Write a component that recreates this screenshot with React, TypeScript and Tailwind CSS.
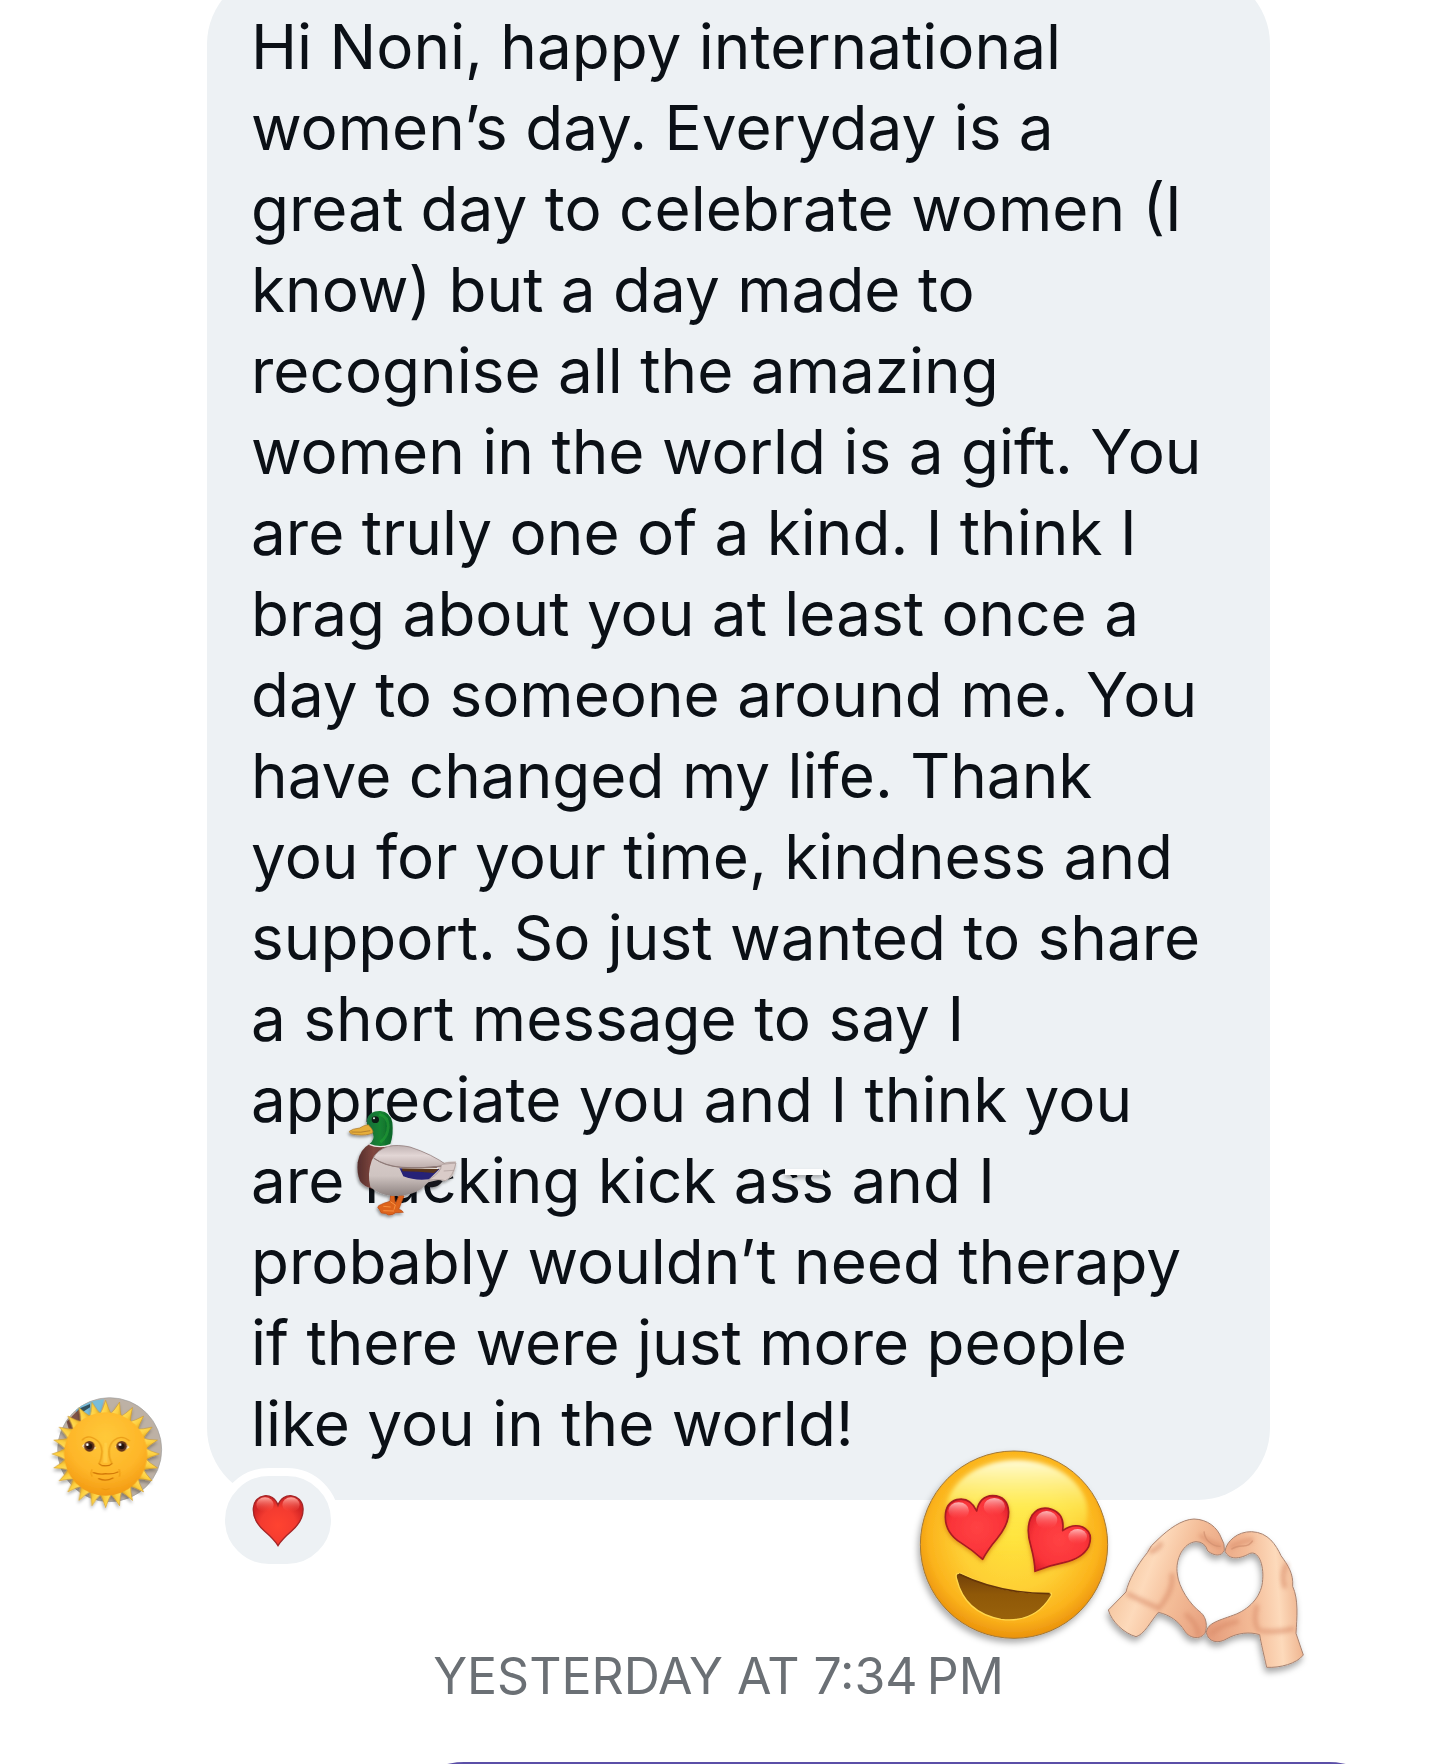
const messageLines = [
  "Hi Noni, happy international",
  "women’s day. Everyday is a",
  "great day to celebrate women (I",
  "know) but a day made to",
  "recognise all the amazing",
  "women in the world is a gift. You",
  "are truly one of a kind. I think I",
  "brag about you at least once a",
  "day to someone around me. You",
  "have changed my life. Thank",
  "you for your time, kindness and",
  "support. So just wanted to share",
  "a short message to say I",
  "appreciate you and I think you",
  "are fucking kick ass and I",
  "probably wouldn’t need therapy",
  "if there were just more people",
  "like you in the world!",
];

const rays = Array.from({ length: 24 }, (_, i) => i * 15);

function SunAvatar() {
  return (
    <svg viewBox="45 48 312 312" className="size-[104px] shrink-0 overflow-visible" role="img" aria-label="Sun with face">
      <defs>
        <radialGradient id="sunFace" cx="0.5" cy="0.3" r="0.7">
          <stop offset="0" stopColor="#ffc93a" />
          <stop offset="0.65" stopColor="#feb629" />
          <stop offset="1" stopColor="#f39a12" />
        </radialGradient>
        <linearGradient id="sunRay" x1="0" y1="0" x2="1" y2="0">
          <stop offset="0" stopColor="#ffe36a" />
          <stop offset="0.55" stopColor="#fdcf3e" />
          <stop offset="1" stopColor="#d79a1e" />
        </linearGradient>
        <filter id="sunShadow" x="-20%" y="-20%" width="140%" height="150%">
          <feDropShadow dx="-2" dy="8" stdDeviation="5" floodOpacity="0.3" />
        </filter>
      </defs>
      <circle cx="209" cy="209" r="156" fill="#bdb1a5" stroke="#9e9e9e" strokeWidth="2" />
      <path d="M108 90Q145 60 192 58L180 105L110 130Z" fill="#79bddb" />
      <path d="M80 125L118 86L135 125L90 160Z" fill="#805448" />
      <path d="M120 85L150 72L150 82L125 98Z" fill="#31515f" />
      <g filter="url(#sunShadow)">
        {rays.map((a) => (
          <path
            key={a}
            d="M177 108Q189 88 197 61Q205 88 217 108Z"
            fill="url(#sunRay)"
            stroke="#c8952a"
            strokeWidth="1.5"
            transform={`rotate(${a} 197 222)`}
          />
        ))}
        <circle cx="197" cy="222" r="125" fill="url(#sunFace)" />
      </g>
      <path d="M126 181Q144 160 172 182Q185 192 186 215Q184 240 177 251Q197 266 216 250Q207 237 207 213Q210 190 222 181Q244 162 269 183" fill="none" stroke="#e18c0b" strokeWidth="4" opacity="0.65" />
      <path d="M193 188Q189 222 190 248L203 248Q203 214 201 188Z" fill="#ffd14c" opacity="0.7" />
      <path d="M126 198Q146 175 168 204Q146 222 126 198Z" fill="#fff1d4" />
      <path d="M226 200Q248 175 268 202Q247 221 226 200Z" fill="#fff1d4" />
      <circle cx="148" cy="199" r="16" fill="#65351b" />
      <circle cx="245" cy="199" r="16" fill="#65351b" />
      <circle cx="148" cy="199" r="9" fill="#24120d" />
      <circle cx="245" cy="199" r="9" fill="#24120d" />
      <circle cx="142" cy="194" r="4" fill="#fff" />
      <circle cx="240" cy="194" r="4" fill="#fff" />
      <path d="M177 251Q184 260 197 257Q210 260 217 250" fill="none" stroke="#cb7205" strokeWidth="3" />
      <path d="M160 278Q180 285 197 281Q216 284 234 276M176 296Q198 306 219 294" fill="none" stroke="#d27706" strokeWidth="4" strokeLinecap="round" />
      <path d="M156 268Q150 280 156 290M237 267Q243 278 238 290M185 326Q197 332 209 326" fill="none" stroke="#ec980f" strokeWidth="3" />
    </svg>
  );
}

function Duck() {
  return (
    <svg viewBox="0 0 480 420" className="absolute left-[113px] top-[1117px] h-[140px] w-[160px]" role="img" aria-label="Duck">
      <defs>
        <linearGradient id="duckHead" x1="0" y1="0" x2="1" y2="0">
          <stop offset="0" stopColor="#176b3b" />
          <stop offset="0.5" stopColor="#168432" />
          <stop offset="1" stopColor="#0b6429" />
        </linearGradient>
        <linearGradient id="duckBody" x1="0" y1="0" x2="0" y2="1">
          <stop offset="0" stopColor="#d9cdcc" />
          <stop offset="0.6" stopColor="#cfc4c1" />
          <stop offset="1" stopColor="#8d8280" />
        </linearGradient>
        <linearGradient id="duckWing" x1="0" y1="0" x2="0" y2="1">
          <stop offset="0" stopColor="#c0b2b2" />
          <stop offset="0.45" stopColor="#e2d6d5" />
          <stop offset="1" stopColor="#bdadab" />
        </linearGradient>
        <linearGradient id="duckBreast" x1="0" y1="0" x2="1" y2="0">
          <stop offset="0" stopColor="#552e2c" />
          <stop offset="0.5" stopColor="#80463f" />
          <stop offset="1" stopColor="#6d3f3b" />
        </linearGradient>
        <filter id="duckShadow" x="-20%" y="-20%" width="140%" height="150%">
          <feDropShadow dx="-3" dy="6" stdDeviation="5" floodOpacity="0.4" />
        </filter>
      </defs>
      <g filter="url(#duckShadow)">
        <path d="M213 312L210 337Q190 342 176 350Q170 356 178 361L184 372Q199 372 206 378Q220 378 226 371L250 370Q246 362 236 361L252 321L238 318L226 344L222 312Z" fill="#dd641d" stroke="#b54510" strokeWidth="2" />
        <path d="M211 338L226 348L222 362M190 352L212 354M190 365L222 366" fill="none" stroke="#f89142" strokeWidth="3" />
        <path d="M312 278Q350 262 368 277Q350 300 325 293Z" fill="#17171a" />
        <path d="M150 164Q119 181 113 220Q110 254 120 276Q130 292 157 299L190 230L208 169Z" fill="url(#duckBreast)" />
        <path d="M205 171Q165 186 155 215Q141 254 151 294Q174 315 215 321Q266 324 303 301L325 280L370 269Q390 274 400 258Q409 235 408 217Q390 216 364 222Q330 192 270 174Q238 167 205 171Z" fill="url(#duckBody)" />
        <path d="M238 236L250 262Q285 276 327 271L358 241L340 228Z" fill="#252077" />
        <path d="M246 237L345 233L357 239L342 252Q295 247 247 247Z" fill="#58351d" />
        <path d="M240 236L356 238" stroke="#f3ece8" strokeWidth="4" />
        <path d="M205 172Q170 184 160 207Q196 230 243 235Q305 239 359 232L383 230Q337 196 270 174Q232 166 205 172Z" fill="url(#duckWing)" stroke="#85706e" strokeWidth="2" />
        <path d="M162 208Q193 231 243 235Q310 239 364 231" fill="none" stroke="#8e7976" strokeWidth="3" />
        <path d="M325 273Q358 270 376 275Q398 266 408 222Q377 218 364 228Q366 249 325 273Z" fill="#d9cbc8" stroke="#a29290" strokeWidth="2" />
        <path d="M370 226L405 222M371 246L402 244" stroke="#a99997" strokeWidth="2" />
        <path d="M147 168Q176 180 210 170L212 163L151 162Z" fill="#ebe7e4" />
        <path d="M149 164Q165 151 159 134Q137 121 141 91Q149 65 181 66Q211 69 217 100Q221 136 211 165Q180 177 149 164Z" fill="url(#duckHead)" />
        <path d="M178 76Q205 82 205 113Q203 144 181 160" fill="none" stroke="#31bc39" strokeWidth="8" opacity="0.35" />
        <path d="M145 107Q130 109 119 117Q98 119 88 127Q89 137 110 137Q138 141 158 132Q162 125 145 107Z" fill="#e6ae3a" stroke="#a9752b" strokeWidth="2" />
        <path d="M94 129Q122 132 151 125" fill="none" stroke="#9b692a" strokeWidth="2" />
        <ellipse cx="166" cy="92" rx="11" ry="10" fill="#111b18" />
        <circle cx="162" cy="88" r="3" fill="#dff3e8" />
      </g>
    </svg>
  );
}

function HeartEyes() {
  return (
    <svg viewBox="0 0 690 660" className="absolute -bottom-[150px] right-[140px] h-[220px] w-[230px] overflow-visible" role="img" aria-label="Smiling face with heart eyes">
      <defs>
        <radialGradient id="faceBase" cx="0.5" cy="0.45" r="0.57">
          <stop offset="0" stopColor="#ffe43d" />
          <stop offset="0.5" stopColor="#fed035" />
          <stop offset="0.8" stopColor="#fbb31c" />
          <stop offset="1" stopColor="#e78a08" />
        </radialGradient>
        <linearGradient id="faceShine" x1="0.5" y1="0" x2="0.5" y2="1">
          <stop offset="0" stopColor="#fffcd9" stopOpacity="1" />
          <stop offset="0.45" stopColor="#fff763" stopOpacity="0.6" />
          <stop offset="0.9" stopColor="#ffe83d" stopOpacity="0" />
        </linearGradient>
        <radialGradient id="eyeHeart" cx="0.5" cy="0.5" r="0.6">
          <stop offset="0" stopColor="#ff4244" />
          <stop offset="0.7" stopColor="#fa3439" />
          <stop offset="1" stopColor="#dc1f29" />
        </radialGradient>
        <linearGradient id="lobeShine" x1="0" y1="0" x2="0" y2="1">
          <stop offset="0" stopColor="#ffc5c5" stopOpacity="0.9" />
          <stop offset="1" stopColor="#ff5558" stopOpacity="0" />
        </linearGradient>
        <linearGradient id="mouth" x1="0" y1="0" x2="0" y2="1">
          <stop offset="0" stopColor="#724009" />
          <stop offset="0.45" stopColor="#8f5808" />
          <stop offset="1" stopColor="#99620b" />
        </linearGradient>
        <filter id="faceShadow" x="-20%" y="-20%" width="140%" height="150%">
          <feDropShadow dx="-6" dy="12" stdDeviation="10" floodOpacity="0.32" />
        </filter>
        <filter id="eyeShadow" x="-20%" y="-20%" width="140%" height="150%">
          <feDropShadow dx="0" dy="5" stdDeviation="6" floodColor="#c75b00" floodOpacity="0.6" />
        </filter>
        <filter id="shineSoft" x="-10%" y="-10%" width="120%" height="120%">
          <feGaussianBlur stdDeviation="6" />
        </filter>
      </defs>
      <circle cx="342" cy="344" r="281" fill="url(#faceBase)" stroke="#a17838" strokeWidth="3" filter="url(#faceShadow)" />
      <ellipse cx="350" cy="246" rx="212" ry="156" fill="url(#faceShine)" filter="url(#shineSoft)" />
      <g filter="url(#eyeShadow)" fill="url(#eyeHeart)" stroke="#a71a20" strokeWidth="5" strokeLinejoin="round">
        <path d="M248 388Q220 362 182 338Q137 309 136 263Q135 219 170 209Q210 200 230 243Q239 198 278 197Q323 198 326 246Q326 284 291 326Q263 359 248 388Z" />
        <path d="M405 424Q404 391 393 350Q375 293 396 256Q418 226 455 238Q495 252 488 302Q518 280 548 291Q582 307 566 350Q548 385 491 398Q445 407 405 424Z" />
      </g>
      <ellipse cx="176" cy="242" rx="31" ry="25" fill="url(#lobeShine)" />
      <ellipse cx="283" cy="230" rx="32" ry="26" fill="url(#lobeShine)" />
      <ellipse cx="440" cy="270" rx="32" ry="27" fill="url(#lobeShine)" />
      <ellipse cx="533" cy="320" rx="28" ry="23" fill="url(#lobeShine)" />
      <path d="M176 430Q165 430 170 447Q194 548 303 568Q404 580 453 498Q458 486 445 489Q304 492 190 434Q181 429 176 430Z" fill="url(#mouth)" stroke="#ffd74b" strokeWidth="4" />
      <path d="M177 432Q300 491 449 491" fill="none" stroke="#673507" strokeWidth="5" />
    </svg>
  );
}

function HeartHands() {
  return (
    <svg viewBox="0 0 720 570" className="absolute -bottom-[190px] -right-[60px] h-[190px] w-[240px] overflow-visible" role="img" aria-label="Heart hands">
      <defs>
        <linearGradient id="leftHand" x1="0" y1="0.3" x2="1" y2="0.7">
          <stop offset="0" stopColor="#f0b98f" />
          <stop offset="0.35" stopColor="#fddabb" />
          <stop offset="0.6" stopColor="#f4bd98" />
          <stop offset="1" stopColor="#e59c7b" />
        </linearGradient>
        <linearGradient id="rightHand" x1="0" y1="0.6" x2="1" y2="0.5">
          <stop offset="0" stopColor="#e59c7b" />
          <stop offset="0.45" stopColor="#f3ba96" />
          <stop offset="0.75" stopColor="#fddabb" />
          <stop offset="1" stopColor="#ecae88" />
        </linearGradient>
        <filter id="handShadow" x="-20%" y="-20%" width="140%" height="150%">
          <feDropShadow dx="-4" dy="13" stdDeviation="9" floodOpacity="0.34" />
        </filter>
        <filter id="handSoft" x="-30%" y="-30%" width="160%" height="160%">
          <feGaussianBlur stdDeviation="7" />
        </filter>
      </defs>
      <g filter="url(#handShadow)" stroke="#a88371" strokeWidth="3" strokeLinejoin="round">
        <path fill="url(#leftHand)" d="M55 330L108 276C116 240 142 194 172 158Q180 137 204 118C235 88 275 58 312 57C353 58 382 82 394 114Q405 131 403 151C395 170 374 169 353 153Q345 125 318 125C280 128 255 178 262 222C266 262 300 314 333 338C351 354 352 382 345 400C331 420 298 416 284 393C267 364 238 344 205 337C180 367 162 404 138 410C103 400 65 366 55 330Z" />
        <path fill="url(#rightHand)" d="M405 154C409 124 442 94 485 95C535 97 558 135 573 167C594 196 611 221 608 259C626 298 621 354 618 400L640 465C620 491 570 504 530 502C522 466 513 430 509 404C480 395 443 398 411 416C384 433 355 426 349 398C351 367 391 361 439 342C484 323 516 284 518 239C522 194 505 149 478 161C450 177 417 181 405 154Z" />
      </g>
      <g fill="none" stroke="#d88a68" strokeWidth="14" opacity="0.6" strokeLinecap="round" filter="url(#handSoft)">
        <path d="M116 283Q165 307 200 322M246 225Q252 270 206 326M184 154Q205 148 212 132M334 108Q360 128 390 139M290 345Q325 375 325 405" />
        <path d="M519 393Q565 398 607 387M500 320Q488 366 506 391M588 196Q573 223 584 259M426 140Q448 126 484 120M365 400Q390 375 440 365" />
      </g>
      <path d="M342 94Q344 113 355 124Q374 141 392 139M488 122Q479 139 457 138Q436 139 424 148" fill="none" stroke="#d39272" strokeWidth="4" opacity="0.8" />
    </svg>
  );
}

function Heart() {
  return (
    <svg viewBox="156 158 156 159" className="h-[53px] w-[52px]" aria-hidden="true">
      <defs>
        <radialGradient id="heartFill" cx="0.5" cy="0.6" r="0.55">
          <stop offset="0" stopColor="#ff4330" />
          <stop offset="0.65" stopColor="#f43b30" />
          <stop offset="1" stopColor="#d12424" />
        </radialGradient>
        <linearGradient id="heartShine" x1="0" y1="0" x2="0" y2="1">
          <stop offset="0" stopColor="#ffaaa1" />
          <stop offset="1" stopColor="#fb4a3d" stopOpacity="0" />
        </linearGradient>
      </defs>
      <path d="M234 313Q222 294 194 270C167 246 158 226 160 200C163 157 220 148 234 192C248 148 306 157 309 200C311 226 301 246 274 270Q246 294 234 313Z" fill="url(#heartFill)" stroke="#a42627" strokeWidth="4" />
      <ellipse cx="195" cy="190" rx="26" ry="22" fill="url(#heartShine)" />
      <ellipse cx="273" cy="190" rx="26" ry="22" fill="url(#heartShine)" />
    </svg>
  );
}

export default function App() {
  return (
    <main className="flex h-screen flex-col overflow-hidden bg-white font-['Inter',sans-serif]">
      <article className="-mt-7 flex shrink-0 items-end pl-[55px] pr-[167px]">
        <SunAvatar />
        <div className="relative ml-12 flex-1 rounded-[72px] bg-[#edf1f4] pb-9 pl-11 pt-[34px]">
          <p className="text-[62px] leading-[81px] text-[#0b1016]">
            {messageLines.map((line) => (
              <span key={line} className="block whitespace-nowrap">
                {line}
              </span>
            ))}
          </p>
          <Duck />
          <span className="absolute left-[578px] top-[1197px] h-1.5 w-[38px] bg-white shadow-[0_3px_4px_rgba(0,0,0,0.3)]" />
          <button
            type="button"
            aria-label="Heart reaction"
            className="absolute -bottom-[72px] left-2.5 flex h-[104px] w-[122px] items-center justify-center rounded-full border-8 border-white bg-[#edf1f4]"
          >
            <Heart />
          </button>
          <HeartEyes />
          <HeartHands />
        </div>
      </article>
      <time className="mt-[146px] shrink-0 text-center text-[50px] leading-[60px] text-[#6b7075]">YESTERDAY AT 7:34{"\u202f"}PM</time>
      <div className="ml-[392px] mr-[36px] mt-[56px] h-40 shrink-0 rounded-[72px] bg-[#5b4fa8]" />
    </main>
  );
}
